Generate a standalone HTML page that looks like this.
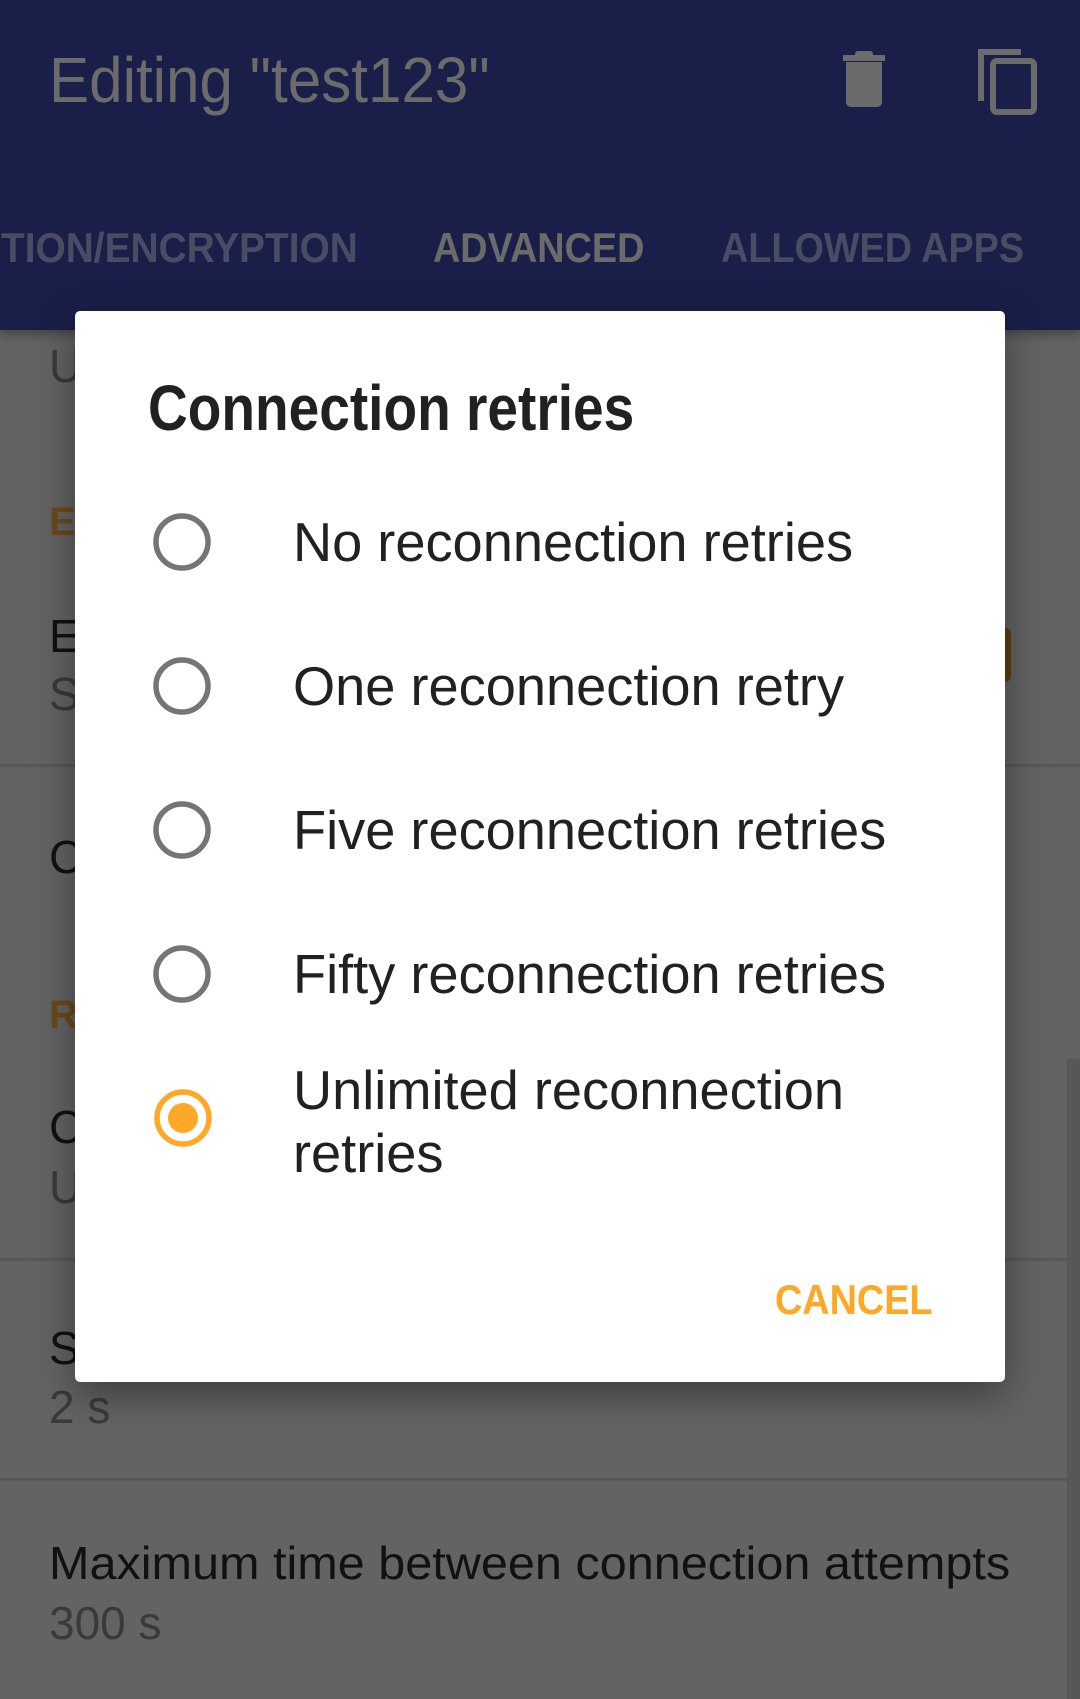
<!DOCTYPE html>
<html><head><meta charset="utf-8"><style>
html,body{margin:0;padding:0}
body{width:1080px;height:1699px;position:relative;overflow:hidden;background:#636363;font-family:"Liberation Sans",Arial,sans-serif}
.a{position:absolute;white-space:nowrap;line-height:1}
.bar{position:absolute;left:0;top:0;width:1080px;height:330px;background:#1a1f4a;box-shadow:0 4px 10px rgba(0,0,0,.35)}
.div{position:absolute;left:0;width:1080px;height:3px;background:#575757}
.dlg{position:absolute;left:75px;top:311px;width:930px;height:1071px;background:#fff;border-radius:5px;box-shadow:0 12px 40px rgba(0,0,0,.4)}
.opt{position:absolute;left:218px;font-size:55px;color:#212121;white-space:nowrap;line-height:63px;transform:scaleX(.985);transform-origin:left}
</style></head><body>
<div class="bar"></div>
<div class="a" style="left:49px;top:48px;font-size:64px;color:#6b6b6b;transform:scaleX(.94);transform-origin:left">Editing "test123"</div>
<svg class="a" style="left:840px;top:48px" width="50" height="62" viewBox="0 0 50 62">
<rect x="3" y="7" width="42" height="6" fill="#6b6b6b"/><rect x="15" y="3" width="18" height="6" rx="3" fill="#6b6b6b"/>
<path d="M6 14h36v40a5 5 0 0 1-5 5H11a5 5 0 0 1-5-5z" fill="#6b6b6b"/></svg>
<svg class="a" style="left:975px;top:43px" width="66" height="74" viewBox="0 0 66 74">
<path d="M6 58V9h40" fill="none" stroke="#6b6b6b" stroke-width="6"/>
<rect x="18" y="18" width="41" height="51" rx="4" fill="none" stroke="#6b6b6b" stroke-width="6"/></svg>
<div class="a" style="left:1px;top:227px;font-size:42px;font-weight:bold;color:#4a4c62;transform:scaleX(.925);transform-origin:left">TION/ENCRYPTION</div>
<div class="a" style="left:433px;top:227px;font-size:42px;font-weight:bold;color:#6b6b6b;transform:scaleX(.9);transform-origin:left">ADVANCED</div>
<div class="a" style="left:721px;top:227px;font-size:42px;font-weight:bold;color:#4a4c62;transform:scaleX(.9);transform-origin:left">ALLOWED APPS</div>

<div class="a" style="left:49px;top:343px;font-size:46px;color:#3a3a3a">Unlimited</div>
<div class="a" style="left:49px;top:502px;font-size:40px;font-weight:bold;color:#6b4a1a">Ex</div>
<div class="a" style="left:49px;top:613px;font-size:46px;color:#111">Ex</div>
<div class="a" style="left:49px;top:671px;font-size:46px;color:#3a3a3a">Sx</div>
<div style="position:absolute;left:990px;top:628px;width:21px;height:54px;border-radius:6px;background:#5e3f0f"></div>
<div class="div" style="top:764px"></div>
<div class="a" style="left:49px;top:834px;font-size:46px;color:#111">Cx</div>
<div class="a" style="left:49px;top:995px;font-size:40px;font-weight:bold;color:#6b4a1a">Rx</div>
<div class="a" style="left:49px;top:1104px;font-size:46px;color:#111">Cx</div>
<div class="a" style="left:49px;top:1164px;font-size:46px;color:#3a3a3a">Ux</div>
<div class="div" style="top:1258px"></div>
<div class="a" style="left:49px;top:1325px;font-size:46px;color:#111">Sx</div>
<div class="a" style="left:49px;top:1384px;font-size:46px;color:#3a3a3a">2 s</div>
<div class="div" style="top:1478px"></div>
<div class="a" style="left:49px;top:1540px;font-size:46px;color:#111;transform:scaleX(1.056);transform-origin:left">Maximum time between connection attempts</div>
<div class="a" style="left:49px;top:1600px;font-size:46px;color:#3a3a3a">300 s</div>
<div style="position:absolute;left:1067px;top:1059px;width:13px;height:640px;background:#575757"></div>

<div class="dlg">
<div class="a" style="left:73px;top:65px;font-size:64px;font-weight:bold;color:#212121;transform:scaleX(.86);transform-origin:left">Connection retries</div>
<svg class="a" style="left:77px;top:201px" width="60" height="60"><circle cx="30" cy="30" r="26" fill="none" stroke="#757575" stroke-width="5.5"/></svg>
<div class="opt" style="top:200px">No reconnection retries</div>
<svg class="a" style="left:77px;top:345px" width="60" height="60"><circle cx="30" cy="30" r="26" fill="none" stroke="#757575" stroke-width="5.5"/></svg>
<div class="opt" style="top:344px">One reconnection retry</div>
<svg class="a" style="left:77px;top:489px" width="60" height="60"><circle cx="30" cy="30" r="26" fill="none" stroke="#757575" stroke-width="5.5"/></svg>
<div class="opt" style="top:488px">Five reconnection retries</div>
<svg class="a" style="left:77px;top:633px" width="60" height="60"><circle cx="30" cy="30" r="26" fill="none" stroke="#757575" stroke-width="5.5"/></svg>
<div class="opt" style="top:632px">Fifty reconnection retries</div>
<svg class="a" style="left:78px;top:777px" width="60" height="60"><circle cx="30" cy="30" r="26" fill="none" stroke="#FFA726" stroke-width="5.5"/><circle cx="30" cy="30" r="15" fill="#FFA726"/></svg>
<div class="opt" style="top:748px">Unlimited reconnection<br>retries</div>
<div class="a" style="left:700px;top:968px;font-size:42px;font-weight:bold;color:#FFA726;transform:scaleX(.9);transform-origin:left">CANCEL</div>
</div>
</body></html>
